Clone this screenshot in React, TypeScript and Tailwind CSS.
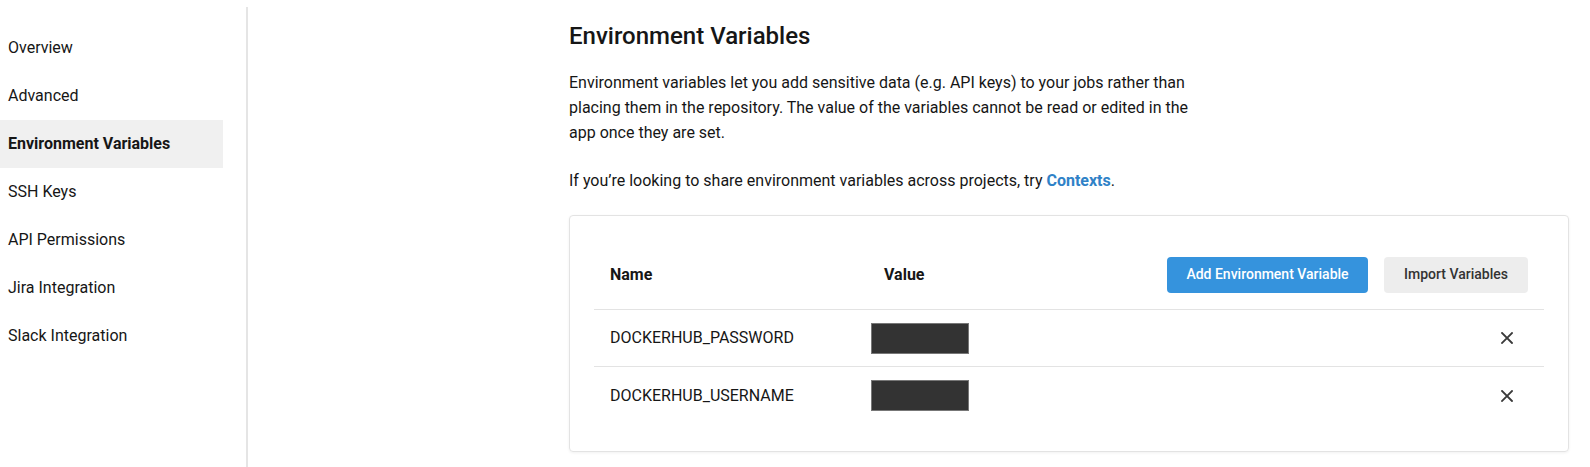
import React from 'react'

const navItems = [
  'Overview',
  'Advanced',
  'Environment Variables',
  'SSH Keys',
  'API Permissions',
  'Jira Integration',
  'Slack Integration',
]

const vars = ['DOCKERHUB_PASSWORD', 'DOCKERHUB_USERNAME']

function CloseIcon() {
  return (
    <svg width="12" height="12" viewBox="0 0 12 12" fill="none" stroke="#3a3a3a" strokeWidth="1.8" strokeLinecap="square">
      <path d="M1 1L11 11M11 1L1 11" />
    </svg>
  )
}

export default function App() {
  return (
    <div className="flex h-[467px] w-[1590px] bg-white text-[#161616] font-['Roboto',sans-serif] overflow-hidden">
      <aside className="w-[248px] shrink-0 pt-[7px]">
        <div className="h-full border-r-2 border-[#e5e5e5] pt-[17px]">
          <nav className="flex flex-col w-[223px]">
            {navItems.map((item) => (
              <div
                key={item}
                className={`h-[48px] flex items-center pl-[8px] text-[16px] ${item === 'Environment Variables' ? 'bg-[#f0f0f0] font-bold' : ''}`}
              >
                {item}
              </div>
            ))}
          </nav>
        </div>
      </aside>

      <main className="flex-1 pl-[321px] pr-[22px] pt-[20px]">
        <h1 className="text-[24px] leading-8 font-medium">Environment Variables</h1>
        <p className="mt-[18px] max-w-[630px] text-[16px] leading-[25px]">
          Environment variables let you add sensitive data (e.g. API keys) to your jobs rather than placing them in the
          repository. The value of the variables cannot be read or edited in the app once they are set.
        </p>
        <p className="mt-[23px] text-[16px] leading-[25px]">
          If you’re looking to share environment variables across projects, try{' '}
          <a href="#" className="font-bold text-[#2f82c7]">Contexts</a>.
        </p>

        <div className="mt-[22px] w-[1000px] rounded-[4px] border border-[#e3e3e3] shadow-[0_1px_3px_rgba(0,0,0,0.06)] px-[24px] pt-[24px] pb-[27px]">
          <div className="flex items-center h-[70px] border-b border-[#e3e3e3]">
            <div className="w-[277px] pl-[16px] text-[16px] font-bold">Name</div>
            <div className="flex-1 pl-[13px] text-[16px] font-bold">Value</div>
            <div className="flex items-center gap-[16px] pr-[16px]">
              <button className="h-[36px] w-[201px] rounded-[4px] bg-[#3593dd] text-white text-[14px] font-medium">
                Add Environment Variable
              </button>
              <button className="h-[36px] w-[144px] rounded-[4px] bg-[#ededed] text-[#333] text-[14px] font-medium">
                Import Variables
              </button>
            </div>
          </div>
          {vars.map((v, i) => (
            <div key={v} className={`flex items-center h-[57px] ${i === 0 ? 'border-b border-[#e3e3e3]' : ''}`}>
              <div className="w-[277px] pl-[16px] text-[16px]">{v}</div>
              <div className="flex-1">
                <div className="h-[31px] w-[98px] bg-[#333] border border-[#777]" />
              </div>
              <div className="pr-[31px] flex items-center">
                <CloseIcon />
              </div>
            </div>
          ))}
        </div>
      </main>
    </div>
  )
}
